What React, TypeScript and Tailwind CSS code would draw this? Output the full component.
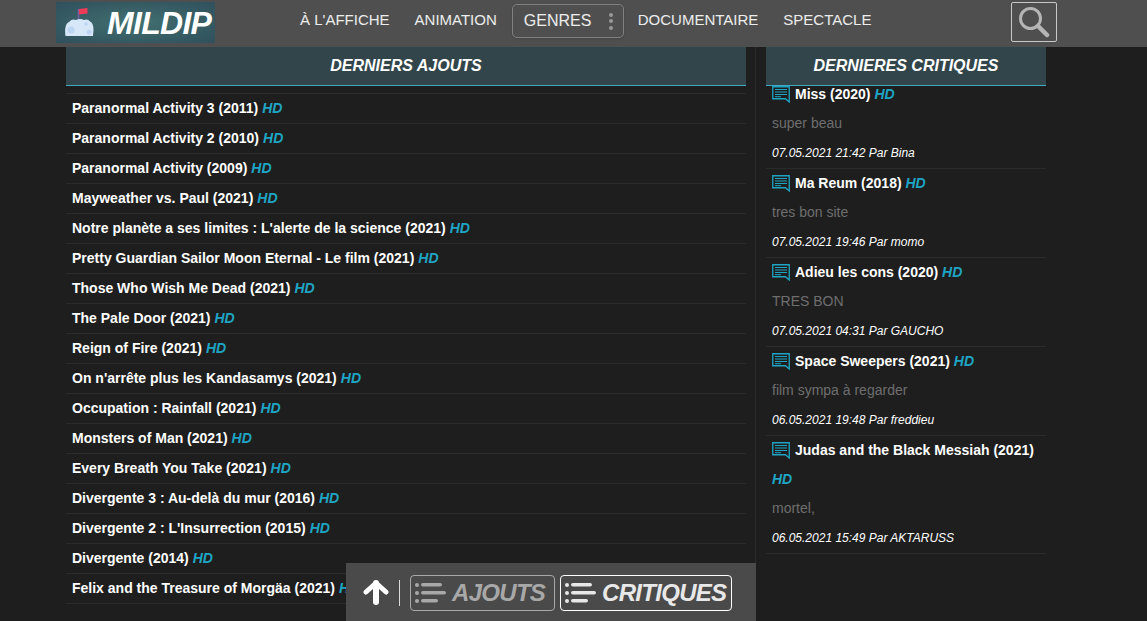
import React from "react";

const latest = [
  "Paranormal Activity 3 (2011)",
  "Paranormal Activity 2 (2010)",
  "Paranormal Activity (2009)",
  "Mayweather vs. Paul (2021)",
  "Notre planète a ses limites : L'alerte de la science (2021)",
  "Pretty Guardian Sailor Moon Eternal - Le film (2021)",
  "Those Who Wish Me Dead (2021)",
  "The Pale Door (2021)",
  "Reign of Fire (2021)",
  "On n'arrête plus les Kandasamys (2021)",
  "Occupation : Rainfall (2021)",
  "Monsters of Man (2021)",
  "Every Breath You Take (2021)",
  "Divergente 3 : Au-delà du mur (2016)",
  "Divergente 2 : L'Insurrection (2015)",
  "Divergente (2014)",
  "Felix and the Treasure of Morgäa (2021)",
];

const reviews = [
  { title: "Miss (2020)", body: "super beau", meta: "07.05.2021 21:42 Par Bina" },
  { title: "Ma Reum (2018)", body: "tres bon site", meta: "07.05.2021 19:46 Par momo" },
  { title: "Adieu les cons (2020)", body: "TRES BON", meta: "07.05.2021 04:31 Par GAUCHO" },
  { title: "Space Sweepers (2021)", body: "film sympa à regarder", meta: "06.05.2021 19:48 Par freddieu" },
  { title: "Judas and the Black Messiah (2021)", body: "mortel,", meta: "06.05.2021 15:49 Par AKTARUSS" },
];

function Hd() {
  return <span className="font-bold italic text-[#1fa5c4]">HD</span>;
}

function CommentIcon() {
  return (
    <svg viewBox="0 0 18 17" className="inline-block w-[18px] h-[17px] mr-[5px] align-[-4px]" fill="none" stroke="#1fa5c4">
      <path d="M0.75 0.75H17.25V16L13.5 12.75H0.75Z" strokeWidth="1.3" />
      <path d="M3 3.5H15M3 6H15M3 8.5H15M3 10.7H9" strokeWidth="1" />
    </svg>
  );
}

function ListIcon({ color }: { color: string }) {
  return (
    <svg viewBox="0 0 31 22" className="w-[31px] h-[22px] shrink-0" fill={color}>
      <circle cx="2" cy="3" r="2" />
      <circle cx="2" cy="11" r="2" />
      <circle cx="2" cy="19" r="2" />
      <rect x="6" y="1" width="21" height="3.6" rx="1.8" />
      <rect x="6" y="9" width="25" height="3.6" rx="1.8" />
      <rect x="6" y="17" width="17" height="3.6" rx="1.8" />
    </svg>
  );
}

function Logo() {
  return (
    <div className="w-[159px] h-[41px] mt-[2px] flex items-center bg-[radial-gradient(ellipse_at_center,#417070,#2f4f5c)]">
      <svg viewBox="0 0 30 30" className="w-[30px] h-[30px] ml-[9px]">
        <path d="M13.5 12V1" stroke="#7a5ca8" strokeWidth="1.5" />
        <path d="M14 1L22.5 0V5.5L14 6.5Z" fill="#ee3b57" />
        <path d="M0.5 28C-0.5 22 0.5 15 4 14Q7 10.5 11 12Q15 10 19 12Q23 10.5 25 13.5Q28.5 15 28.5 22L28 28Z" fill="#d6e7f8" />
        <g fill="#bcd6f2">
          <circle cx="6" cy="22" r="3.5" />
          <circle cx="21" cy="16" r="1.8" />
          <circle cx="24" cy="24" r="2.5" />
        </g>
      </svg>
      <span className="ml-[12px] text-white font-bold italic text-[32px] leading-none tracking-[-0.7px]">MILDIP</span>
    </div>
  );
}

export default function App() {
  return (
    <div className="relative h-[621px] overflow-hidden bg-[#1e1e1e] font-['Liberation_Sans',Arial,sans-serif]">
      <header className="h-[47px] bg-[#4f4f4f] flex items-start pl-[56px]">
        <Logo />
        <nav className="flex items-center h-[41px] ml-[85px] text-white/90 text-[15px] mt-0">
          <a className="mr-[25px]">À L'AFFICHE</a>
          <a className="mr-[15px]">ANIMATION</a>
          <div className="w-[112px] h-[34px] mt-[1px] mr-[14px] border border-[#808080] rounded-[5px] flex items-center justify-between pl-[11px] pr-[10px] text-[16px] shadow-sm">
            GENRES
            <span className="flex flex-col gap-[2.5px]">
              <i className="w-1 h-1 rounded-full bg-[#999]" />
              <i className="w-1 h-1 rounded-full bg-[#999]" />
              <i className="w-1 h-1 rounded-full bg-[#999]" />
            </span>
          </div>
          <a className="mr-[25px]">DOCUMENTAIRE</a>
          <a>SPECTACLE</a>
        </nav>
        <button className="ml-[140px] mt-[2px] w-[46px] h-[40px] border border-[#c8c8c8] rounded-[2px] flex items-center justify-center">
          <svg viewBox="0 0 32 32" className="w-[32px] h-[32px]" fill="none" stroke="#b5b5b5">
            <circle cx="12.5" cy="12.5" r="10" strokeWidth="3" />
            <path d="M20 20L29 29" strokeWidth="4.5" strokeLinecap="round" />
          </svg>
        </button>
      </header>

      <main className="flex ml-[66px]">
        <section className="w-[680px] shrink-0">
          <h2 className="h-[39px] bg-[#32454a] border-b border-[#3fa9bd] flex items-center justify-center text-white font-bold italic text-[16px]">
            DERNIERS AJOUTS
          </h2>
          <ul className="mt-[7px] border-t border-[#2b2b2b]">
            {latest.map((t) => (
              <li key={t} className="h-[30px] border-b border-[#2b2b2b] pl-[6px] flex items-center gap-1 text-[14px] font-bold text-white whitespace-nowrap">
                {t} <Hd />
              </li>
            ))}
          </ul>
        </section>
        <div className="w-px h-[520px] ml-[9px] bg-[#2b2b2b]" />
        <section className="w-[280px] ml-[10px] shrink-0">
          <h2 className="h-[39px] bg-[#32454a] border-b border-[#3fa9bd] flex items-center justify-center text-white font-bold italic text-[16px]">
            DERNIERES CRITIQUES
          </h2>
          <ul className="-mt-[6px]">
            {reviews.map((r) => (
              <li key={r.title} className="border-b border-[#2b2b2b] pl-[6px]">
                <p className="text-[14px] font-bold text-white leading-[29px]">
                  <CommentIcon />
                  {r.title} <Hd />
                </p>
                <p className="text-[14px] text-[#6e6e6e] leading-[29px]">{r.body}</p>
                <p className="text-[12px] italic text-white leading-[29px] mt-px">{r.meta}</p>
              </li>
            ))}
          </ul>
        </section>
      </main>

      <div className="absolute left-[346px] bottom-0 w-[410px] h-[58px] bg-[#4a4a4a] flex items-center pl-[17px] pt-[2px]">
        <svg viewBox="0 0 26 24" className="w-[26px] h-[26px] -mt-[2px]" fill="none" stroke="white" strokeLinecap="round" strokeLinejoin="round">
          <path d="M13 22V3" strokeWidth="6" />
          <path d="M3 12L13 3L23 12" strokeWidth="5" />
        </svg>
        <span className="w-px h-[26px] ml-[10px] bg-white/80" />
        <button className="ml-[10px] w-[145px] h-[36px] border border-[#a8a8a8] rounded-[4px] flex items-center pl-[4px] gap-[6px] text-[#a8a8a8] font-bold italic text-[24px] tracking-[-0.7px]">
          <ListIcon color="#a8a8a8" />
          AJOUTS
        </button>
        <button className="ml-[5px] w-[172px] h-[36px] border border-white rounded-[4px] flex items-center pl-[4px] gap-[6px] text-[#e8e8e8] font-bold italic text-[24px] tracking-[-0.7px]">
          <ListIcon color="#e8e8e8" />
          CRITIQUES
        </button>
      </div>
    </div>
  );
}
